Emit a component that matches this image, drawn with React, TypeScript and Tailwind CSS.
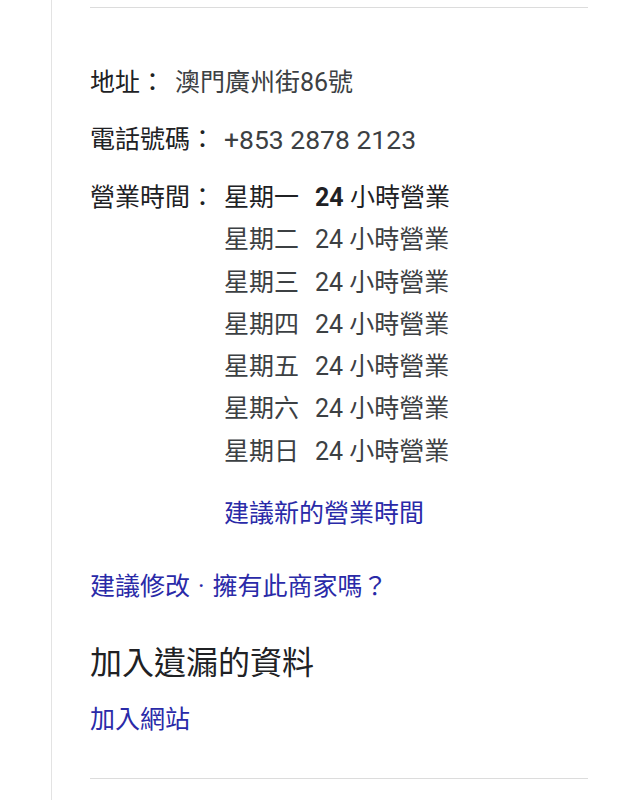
import React from "react";

const days = ["星期一", "星期二", "星期三", "星期四", "星期五", "星期六", "星期日"];

export default function App() {
  return (
    <div lang="zh-Hant-TW" className="h-[800px] overflow-hidden bg-white flex font-['Roboto','Noto_Sans_CJK_TC',sans-serif] text-[25px] text-[#202124]">
      <div className="w-[51px] shrink-0" />
      <div className="flex-1 border-l border-[#e3e3e3] pl-[38px] pr-[56px]">
        <div className="h-[7px]" />
        <div className="border-t border-[#dcdcdc]" />
        <div className="mt-[54px] leading-[42px] flex">
          <span>地址：</span>
          <span className="ml-[10px] text-[#3c4043]">澳門廣州街86號</span>
        </div>
        <div className="mt-[15px] leading-[42px] flex">
          <span>電話號碼：</span>
          <span className="ml-[9px] text-[#3c4043] text-[26.5px]">+853 2878 2123</span>
        </div>
        <div className="mt-[16px] flex leading-[42.3px]">
          <span className="w-[134px] shrink-0">營業時間：</span>
          <div className="flex flex-col">
            {days.map((d, i) => (
              <div key={d} className="flex">
                <span className={"w-[91px] " + (i === 0 ? "text-[#202124]" : "text-[#3c4043]")}>{d}</span>
                {i === 0 ? (
                  <span className="text-[#202124]">
                    <span className="font-bold">24</span> 小時營業
                  </span>
                ) : (
                  <span className="text-[#3c4043]">24 小時營業</span>
                )}
              </div>
            ))}
            <div className="mt-[20px] leading-[42px] text-[#2a2aa8]">建議新的營業時間</div>
          </div>
        </div>
        <div className="mt-[31px] leading-[42px] text-[#2a2aa8]">建議修改<span className="mx-[8px]">·</span>擁有此商家嗎？</div>
        <div className="mt-[34px] leading-[42px] text-[32px] text-[#202124]">加入遺漏的資料</div>
        <div className="mt-[15px] leading-[42px] text-[#2a2aa8]">加入網站</div>
        <div className="mt-[37px] border-t border-[#dcdcdc]" />
      </div>
    </div>
  );
}
